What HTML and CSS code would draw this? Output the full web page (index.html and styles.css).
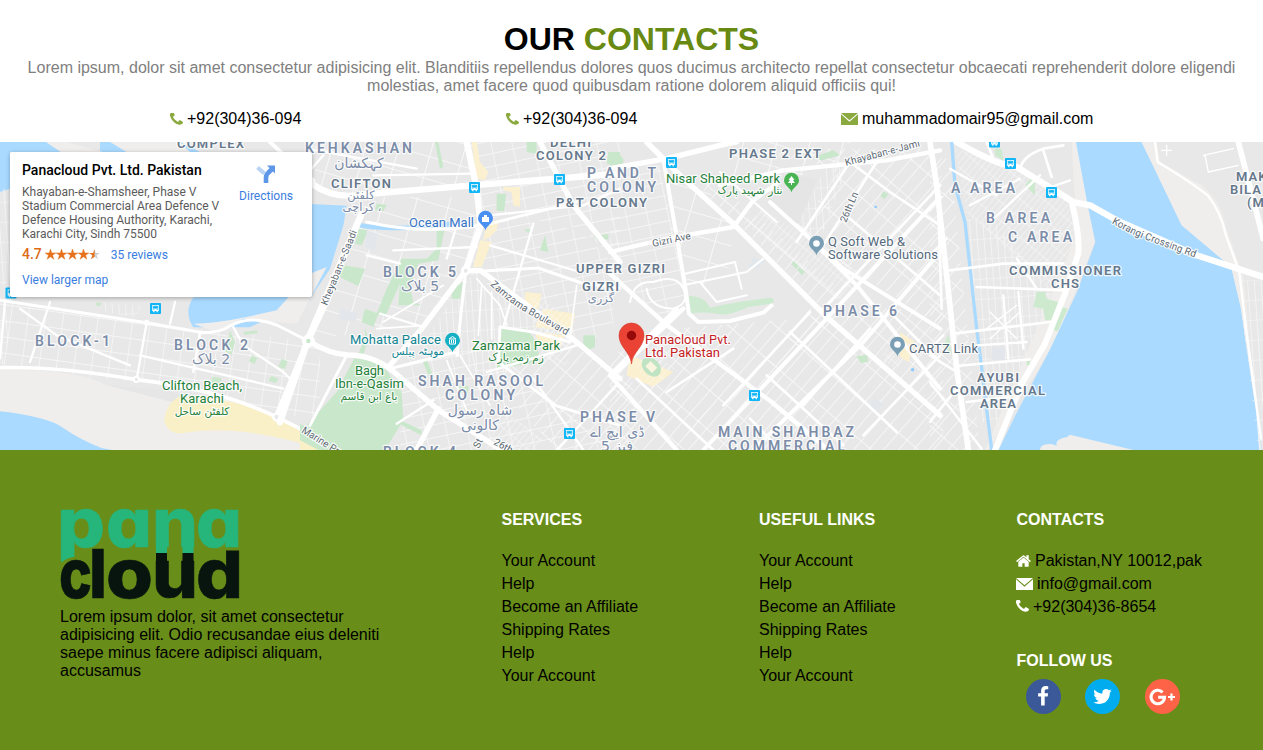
FILE: index.html
```html
<!DOCTYPE html>
<html lang="en">
<head>
<meta charset="utf-8">
<title>Our Contacts</title>
<link rel="stylesheet" href="styles.css">
</head>
<body>
<svg class="defs" width="0" height="0">
  <symbol id="phone" viewBox="192 256 1408 1408"><path d="M1600 1240q0 27-10 70.500t-21 68.500q-21 50-122 106-94 51-186 51-27 0-53-3.500t-57-12.500-47-14.500-55.500-20.500-49.500-18q-98-35-175-83-127-79-264-216t-216-264q-48-77-83-175-3-9-18-49.500t-20.500-55.500-14.500-47-12.500-57-3.500-53q0-92 51-186 56-101 106-122 25-11 68.500-21t70.500-10q14 0 21 3 18 6 53 76 11 19 30 54t35 63.500 31 53.500q3 4 17.500 25t21.500 35.500 7 28.500q0 20-28.500 50t-62 55-62 53-28.500 46q0 9 5 22.500t8.500 20.500 14 24 11.500 19q76 137 174 235t235 174q2 1 19 11.500t24 14 20.500 8.500 22.500 5q18 0 46-28.500t53-62 55-62 50-28.500q14 0 28.500 7t35.500 21.500 25 17.500q25 15 53.500 31t63.500 35 54 30q70 35 76 53 3 7 3 21z"/></symbol>
  <symbol id="mail" viewBox="0 0 17 12"><path d="M0 0h17L8.500 7.300z"/><path d="M0 1.300L8.500 8.700 17 1.300V12H0z"/></symbol>
  <symbol id="home" viewBox="64 256 1664 1280"><path d="M1472 992v480q0 26-19 45t-45 19h-384v-384h-256v384h-384q-26 0-45-19t-19-45v-480q0-1 .5-3t.5-3l575-474 575 474q1 2 1 6zm223-69l-62 74q-8 9-21 11h-3q-13 0-21-7l-692-577-692 577q-12 8-24 7-13-2-21-11l-62-74q-8-10-7-23.500t11-21.500l719-599q32-26 76-26t76 26l244 204v-195q0-14 9-23t23-9h192q14 0 23 9t9 23v408l219 182q10 8 11 21.500t-7 23.500z"/></symbol>
</svg>

<section class="contact">
  <h1>OUR <span>CONTACTS</span></h1>
  <p>Lorem ipsum, dolor sit amet consectetur adipisicing elit. Blanditiis repellendus dolores quos ducimus architecto repellat consectetur obcaecati reprehenderit dolore eligendi molestias, amet facere quod quibusdam ratione dolorem aliquid officiis qui!</p>
  <div class="contact-row">
    <div class="item"><svg class="i-phone"><use href="#phone"/></svg>+92(304)36-094</div>
    <div class="item"><svg class="i-phone"><use href="#phone"/></svg>+92(304)36-094</div>
    <div class="item"><svg class="i-mail"><use href="#mail"/></svg>muhammadomair95@gmail.com</div>
  </div>
</section>

<section class="map">
<svg class="canvas" viewBox="0 0 1263 308" width="1263" height="308">
  <defs>
    <pattern id="gridDefence" width="92" height="34" patternUnits="userSpaceOnUse" patternTransform="rotate(-49)"><path d="M0 0H92M0 0V34" stroke="#fbfbfb" stroke-width="4.500" fill="none"/></pattern>
    <pattern id="gridSoft" width="62" height="38" patternUnits="userSpaceOnUse" patternTransform="rotate(-12)"><path d="M0 0H62M0 0V38" stroke="#fafafa" stroke-width="4" fill="none"/></pattern>
    <pattern id="gridClifton" width="96" height="66" patternUnits="userSpaceOnUse" patternTransform="rotate(16)"><path d="M0 0H96M0 0V66" stroke="#fcfcfc" stroke-width="5" fill="none"/></pattern>
    <pattern id="gridWest" width="52" height="48" patternUnits="userSpaceOnUse" patternTransform="rotate(8)"><path d="M0 0H52M0 0V48" stroke="#fafafa" stroke-width="4" fill="none"/></pattern>
    <pattern id="gridFine" width="15" height="44" patternUnits="userSpaceOnUse" patternTransform="rotate(40)"><path d="M0 0H15M0 0V44" stroke="#fafafa" stroke-width="3" fill="none"/></pattern>
    <pattern id="gridUpright" width="20" height="60" patternUnits="userSpaceOnUse" patternTransform="rotate(-4)"><path d="M0 0H20M0 0V60" stroke="#fafafa" stroke-width="3.500" fill="none"/></pattern>
    <g id="bus"><rect x="-5.500" y="-5.500" width="11" height="11" rx="1" fill="#12b5f5"/><path d="M-3.300-3.500h6.600v6h-1v1.300h-1.300V2.500h-2v1.300h-1.300V2.500h-1z" fill="#fff"/><path d="M-2.200-2.300h4.400v2h-4.400zM-2.200 1h1M1.200 1h1" stroke="#12b5f5" stroke-width=".8" fill="#12b5f5"/></g>
    <path id="pin" d="M0 12C-.8 7-7.500 5.500-7.500-.2a7.500 7.500 0 0 1 15 0C7.500 5.500.8 7 0 12z"/>
    <path id="boulevard" d="M490 143Q511 163 534 175L585 204"/>
    <path id="korangi" d="M1111.500 81Q1128 91 1147 98L1215 123"/>
  </defs>
  <rect width="1263" height="308" fill="#e8e8e8"/>

  <!-- West shore -->
  <g transform="scale(.33333)">
    <path d="M0 0h960v924H0z" fill="#e8e8e8"/>
    <path d="M0 0h140L200 40 300 60V0h240l60 30H30v110L0 150z" fill="#aadaff"/>
    <path d="M138 0h60l130 35H190zM330 0h210l30 30H380z" fill="#f0eeec"/>
    <path d="M935 186l105 5-10 60-40 130-75 110-75 20-90 45H580q-30-45 0-90l350-10z" fill="#aadaff"/>
    <path d="M580 545q60 0 160-20l90-20 100-110 50-20-90 170-160-15-80 40z" fill="#f0eeec"/>
    <path d="M0 475L440 545 960 600v220L830 825 500 730 0 680z" fill="url(#gridWest)"/>
    <path d="M0 140h30v270L0 440z" fill="url(#gridUpright)"/>
    <path d="M0 500h35l-20 165H0z" fill="url(#gridUpright)"/>
    <path d="M310 480l110 12-5 35-110-20z" fill="url(#gridUpright)"/>
    <path d="M0 684q220-5 320 45l180 45 300 70 160 80H0z" fill="#f0eeec"/>
    <path d="M320 729l180 15 310 80 150 100-430-140z" fill="#e6e6e6"/>
    <path d="M0 808q140 15 190 50t115 60l30 6H0z" fill="#aadaff"/>
    <path d="M535 765q-40 25-42 75 15 40 60 33 160-30 420 51h90l-120-50-180-80-150-30z" fill="#f9f0c8"/>
    <path d="M690 565l15 35-10 38-20-10zM730 570l40-5 3 8-40 6zM756 640l16 8-8 18-18-8zM845 650l18 8-8 24-20-8zM815 702l20 8-8 14-22-8zM637 704l28 4-6 20-26-6zM290 480l14 3-4 10-12-3zM900 870l15-12 130 66h-60z" fill="#cbe8cd"/>
    <g fill="none" stroke="#fff" stroke-linecap="round" stroke-linejoin="round">
      <path d="M0 677q170-5 410 36 250 30 420 112l130 65" stroke-width="11"/>
      <path d="M0 475l440 67 170 30q50 0 80-20 60-35 140-3l95 48" stroke-width="9"/>
      <path d="M440 542l-30 170M15 478L0 650M525 480l-15 65M700 555l30 55 120 80 30 30M600 570l-20 120M420 640l430 100" stroke-width="7"/>
      <path d="M60 500l110 80 220 90M150 480l-60 180" stroke-width="7"/>
      <path d="M830 825l95-230 70-150" stroke-width="18"/>
      <path d="M810 0l70 65 60 50" stroke-width="12"/>
      <circle cx="440" cy="542" r="6" stroke-width="5"/><circle cx="409" cy="712" r="8" fill="#e8e8e8" stroke-width="6"/><circle cx="830" cy="825" r="10" fill="#e8e8e8" stroke-width="7"/>
    </g>
  </g>

  <!-- Clifton and Zamzama -->
  <g transform="translate(300) scale(.33333)">
    <path d="M20 0h500v140L170 165 60 130z" fill="url(#gridClifton)"/>
    <path d="M200 165h330v230L370 550 40 590 150 270z" fill="url(#gridClifton)"/>
    <path d="M510 0h450v360L840 260 540 200z" fill="url(#gridSoft)"/>
    <path d="M510 395l70-170 260 40 100 100v210L820 600z" fill="url(#gridSoft)"/>
    <path d="M500 400l320 205-200-50-5 190-240-150z" fill="url(#gridUpright)"/>
    <path d="M300 660l250-40 400 304H300z" fill="url(#gridSoft)"/>
    <path d="M560 690l260-90 180 120v204H770z" fill="url(#gridDefence)"/>
    <path d="M690 560l130 0-20 110-100-30zM600 800l130 90-30 34H560z" fill="url(#gridFine)"/>
    <path d="M180 250q100 20 320-10" fill="none" stroke="#aadaff" stroke-width="14"/>
    <path d="M130 370l65 10-20 52-58-28zM175 260l30 5-20 45-20-5zM305 350l75 0 30-30 0-65 25 0-20 100-60 10-25 70 10 45 25 10-70 0 5-65-45 100-25-10 30-75zM195 500l40 15-15 40-35-15zM195 555l0 35-20 45 15 0 15-40zM600 560l80 0 30 40 10 60-130 20zM455 440l35-20-10 50-25 0zM720 325l15-45 10 50zM590 155h28l-5 52h-23zM405 0l15 80 10-5-15-75zM850 580h35v35l-35 15zM670 262h22l-5 10zM880 280l45-3v15l-30 3zM365 650h15l20 55-15-5zM470 732h35v20h-25zM300 835l65 30 0 15-60-30zM230 185l30 3-10 20-25-3zM925 30h35v45l-40-10zM680 0h30v35l-30-5z" fill="#c9e7ca"/>
    <path d="M165 645q50-10 95 40l45 65 5 85-55 89H110L20 850l90-100z" fill="#c9e7ca"/>
    <path d="M0 845l150 79H0z" fill="#c9e7ca"/><path d="M0 895l55 29H0z" fill="#f9f0c8"/>
    <path d="M515 0h15l10 60 25 30-10 25-25-5zM610 135h50l0 60-20-5-5-40-25-5zM560 240l35-5-5 30-20 20-20 10zM540 295l35 5-30 75h-25zM675 450l50 5-10 45-40-5zM730 500l95 15-10 55-110-15zM705 570l90 10-20 50-60-20z" fill="#fbf0cf"/>
    <path d="M200 265l35 10-15 55-25-15zM120 500l55 15-10 25-50-10z" fill="#e3e7ec"/>
    <path d="M690 450l135 80-20 110-100-70z" fill="url(#gridFine)"/>
    <g fill="none" stroke="#fff" stroke-linecap="round" stroke-linejoin="round">
      <path d="M35 125q70 50 155 32L580 125 960 95M500 0l30 140 12 110-45 136" stroke-width="19"/>
      <path d="M185 215L25 590-60 840" stroke-width="20"/>
      <path d="M497 386L365 560 270 670M25 597q65 40 120 42 70 0 130 45l140 120 190 120M497 386h45L830 600l130 110" stroke-width="16"/>
      <path d="M415 800l-65 124M720 0l100 190 140 170" stroke-width="16"/>
      <path d="M535 388l180-10 130 45 115 15M497 386l-20 185-5 70M270 680l200-50M140 640L30 850M600 555l100 15 110 30M600 555l-5 105 170 130 195 60M200 240q220 50 430-10l200-50" stroke-width="9"/>
      <path d="M700 245l-90 310M540 250l-70 0-30 100M280 325l250-10M200 340l100 25M240 515l130 40M830 610L560 690M700 710L850 924M950 730L770 924M350 80L20 20M70 40L0 120M570 310l270 80M570 220l280-30 110-50M520 95l-300 5M290 845l110-70" stroke-width="7"/>
      <path d="M530 410l70 80 20 60M545 430l-10 150M575 450v140M250 540l180-110M230 560l150-10M440 655l60 150M480 640l90 150M830 430l-20 160" stroke-width="5"/>
      <circle cx="25" cy="597" r="13" fill="#c9e7ca" stroke-width="13"/><circle cx="497" cy="386" r="10" fill="#e8e8e8" stroke-width="8"/>
    </g>
  </g>

  <!-- Defence phases -->
  <g transform="translate(610) scale(.33333)">
    <path d="M0 70l150 0 80 420-60 50L0 410z" fill="url(#gridSoft)"/>
    <path d="M180 90l130 70 60 100-20 160-130 10-50-210z" fill="url(#gridClifton)"/>
    <path d="M280 150l90 80 280 280 50-60-400-350zM600 500l400 0v424H170L460 640z" fill="url(#gridDefence)"/>
    <path d="M400 20h595v530L590 300l-30-30 130-190z" fill="url(#gridDefence)"/>
    <path d="M0 640l190-80 500-40-520 404H0z" fill="url(#gridDefence)"/>
    <path d="M400 240l60-40 320 210-90 60z" fill="url(#gridFine)"/>
    <path d="M460 160l100-60 60 10-60 150z" fill="#e5e5e5"/>
    <path d="M560 250l90-180 60 10-80 220z" fill="url(#gridUpright)"/>
    <path d="M380 0h340l-30 90-370 30z" fill="url(#gridClifton)"/>
    <path d="M236 462q30 0 50 15l15 20q40-10 90-18l90-12q20 5 5 18l-70 10q-55 25-85 22-45-10-95-2z" fill="#cdead0"/>
    <path d="M0 30q25 0 40 20v25H0zM610 45l60-20 20 15-55 15zM550 357l16 14-8 10-14-14zM568 375l16 14-8 10-14-14zM820 148l15 8-12 16-12-10zM738 642l35-3 0 20-20 4z" fill="#c9e7ca"/>
    <path d="M60 640L190 690 130 735 50 700z" fill="#fbf0cf"/><path d="M65 660l70-20 60 40-65 60z" fill="url(#gridFine)"/><ellipse cx="124" cy="675" rx="33" ry="24" transform="rotate(45 124 675)" fill="#bfe3c3"/><rect x="110" y="664" width="28" height="22" transform="rotate(45 124 675)" fill="#faf5de"/>
    <path d="M870 570l45 30-20 60-25-15z" fill="#fbf0cf"/><path d="M830 620l50 35-20 25-50-30z" fill="url(#gridFine)"/>
    <path d="M430 345l35 15-20 20-30-5zM790 770l30 15-20 25-25-15z" fill="#e2e7ec"/>
    <g fill="none" stroke="#fff" stroke-linecap="round" stroke-linejoin="round">
      <path d="M110 0L215 105 375 250 650 525 990 820M0 80L170 50 330 10 380 0" stroke-width="16"/>
      <path d="M160 50L225 430 237 515 265 540 360 537 460 512 485 490" stroke-width="12"/>
      <path d="M0 330l170-40 200-35 60-80 70-50M330 130L520 85 830 55 990 25" stroke-width="13"/>
      <path d="M0 395l165 150 320 235 170 144M200 500L0 700M0 700l200 224M220 500l-200 190" stroke-width="13"/>
      <path d="M990 165L650 530 280 924M990 330L760 600 430 924M990 560L700 380 480 180M990 740L740 430 560 250" stroke-width="12"/>
      <path d="M990 250L840 150 720 60 560 300M990 460L850 340 720 230M990 130L640 500M800 60L640 310" stroke-width="8"/>
      <path d="M370 620L170 750M600 510L340 790M540 570l320 300M780 560L580 790M850 520l140 140M990 640L760 880M960 0l25 200 10 300" stroke-width="8"/>
      <path d="M60 480q10-65 70-60 70-25 90 20t-30 60q-70 0-80-60M220 430l190-40 50-40M270 420l50 60 90-20M330 90l170 150M225 395l150-35 20 80" stroke-width="6"/>
      <path d="M420 830l90 94M80 710l230 214M470 700l230 210" stroke-width="8"/>
    </g>
    <g fill="#8ccaff"><circle cx="797" cy="195" r="4"/><circle cx="908" cy="683" r="5"/></g>
  </g>

  <!-- Creek and eastern areas -->
  <g transform="translate(930) scale(.33333)">
    <path d="M0 50h60l90 874H0z" fill="url(#gridDefence)"/>
    <path d="M75 20l130 40 200 100 40 120-90 160L110 210z" fill="url(#gridFine)"/>
    <path d="M100 230l90 10 170 200 40 20-90 190-110 270-50-100z" fill="url(#gridUpright)"/>
    <path d="M425 0h20l50 300-120 300-200 324h-10L440 280z" fill="#f0eeec"/>
    <path d="M438 0l35 190 23 110-55 150-80 170-110 210-45 94h790L932 495 905 380 880 355 755 250 635 0z" fill="#aadaff"/>
    <path d="M635 0h45l10 60 125 70q60 50 70 120l55 150 49 524h6L932 495 905 380 880 355 755 250z" fill="#f0eeec"/>
    <path d="M935 415h64v509h-15l-40-350z" fill="url(#gridUpright)"/>
    <path d="M330 924q0-20 35-18l15 5q-5-20 30-25l10-8 190 46z" fill="#f0eeec"/>
    <path d="M65 0l10 130 30 110 35 320 25 200 20 164" fill="none" stroke="#aadaff" stroke-width="10"/>
    <path d="M300 110l15 0v50l-30-30zM195 20h20l5 35-25-15zM320 450l25 0 5 20 35 10-20 55-20 0-5-35-30-5zM395 495l18 5-30 68-15-5zM55 575l10 60-25-20zM290 650h10v20h-10z" fill="#cdeacf"/>
    <path d="M185 615h40v40h-40z" fill="#e3e7ec"/>
    <g fill="none" stroke="#fff" stroke-linecap="round" stroke-linejoin="round">
      <path d="M80 0Q200 70 260 75L430 180l50 10 80 45 240 105 200 65" stroke-width="19"/>
      <path d="M425 180q25 100 20 155l-40 120-60 150-70 120-80 199" stroke-width="18"/>
      <path d="M0 0l20 130 30 270 30 280 35 244M925 0l75 290" stroke-width="17"/>
      <path d="M675 0l8 60q100 60 150 100 40 50 55 120l40 110 20 170 45 330" stroke-width="7"/>
      <path d="M60 385l160-20 180 0M140 435l270 10M70 575l290-35M80 672l220-20M110 780l130-15M170 0l20 50M270 80q10-40 70-60l60-10M340 25l25 80" stroke-width="8"/>
      <path d="M0 720l155 200M80 740L0 840M40 580L0 620M60 80l140 80M120 190l150-80M180 240L330 100M350 140l70-25M260 350l60 90M220 460l15 190M265 450l15 170M140 610l150-10M0 640l80 50M0 340l50-50" stroke-width="7"/>
      <path d="M170 560l90-70M180 590l90-80M180 510l80 80M820 40l90-20M825 40l10 50 90-20M695 25h30M710 10v30" stroke-width="4"/>
    </g>
  </g>

  <g class="areas">
    <text x="35" y="204" textLength="75">BLOCK-1</text><text x="174" y="208" textLength="74">BLOCK 2</text>
    <text x="305" y="11" textLength="107">KEHKASHAN</text><text x="383" y="135" textLength="73">BLOCK 5</text>
    <text x="418" y="244" textLength="125">SHAH RASOOL</text><text x="445" y="258" textLength="70">COLONY</text>
    <text x="383" y="315" textLength="73">BLOCK 4</text><text x="580" y="280" textLength="75">PHASE V</text>
    <text x="587" y="36" textLength="69">P AND T</text><text x="587" y="50" textLength="69">COLONY</text>
    <text x="823" y="174" textLength="74">PHASE 6</text><text x="718" y="295" textLength="136">MAIN SHAHBAZ</text><text x="728" y="309" textLength="117">COMMERCIAL</text>
    <text x="951" y="51" textLength="64">A AREA</text><text x="986" y="81" textLength="64">B AREA</text><text x="1008" y="100" textLength="64">C AREA</text>
  </g>
  <g class="towns">
    <text x="177" y="6" textLength="68">COMPLEX</text><text x="331" y="46" textLength="61">CLIFTON</text>
    <text x="550" y="5" textLength="42">DELHI</text><text x="536" y="18" textLength="71">COLONY 2</text>
    <text x="556" y="65" textLength="92">P&amp;T COLONY</text><text x="576" y="131" textLength="90">UPPER GIZRI</text><text x="582" y="149" textLength="38">GIZRI</text>
    <text x="729" y="16" textLength="93">PHASE 2 EXT</text><text x="1009" y="133" textLength="113">COMMISSIONER</text><text x="1051" y="146" textLength="29">CHS</text>
    <text x="977" y="240" textLength="43">AYUBI</text><text x="950" y="253" textLength="96">COMMERCIAL</text><text x="980" y="266" textLength="37">AREA</text>
    <text x="1236" y="39">MAK</text><text x="1230" y="52">BILA</text><text x="1247" y="65">(M</text>
  </g>
  <g class="urdu">
    <text x="211" y="222">2 بلاک</text><text x="359" y="26">کہکشان</text><text x="361" y="57" class="small">کلفٹن</text><text x="362" y="69" class="small">، کراچی</text>
    <text x="420" y="149">5 بلاک</text><text x="480" y="273">شاہ رسول</text><text x="480" y="288">کالونی</text><text x="601" y="160" class="small">گزری</text>
    <text x="617" y="295">ڈی ایچ اے</text><text x="617" y="309">فیز 5</text>
  </g>
  <g class="urdu small green"><text x="202" y="273">کلفٹن ساحل</text><text x="369" y="258">باغ ابن قاسم</text><text x="516" y="219">زم زمہ پارک</text><text x="750" y="52">نثار شہید پارک</text><text x="418" y="213" class="teal">موہٹہ پیلس</text></g>
  <g class="places">
    <g class="green"><text x="162" y="248" textLength="80">Clifton Beach,</text><text x="180" y="261" textLength="44">Karachi</text><text x="355" y="233" textLength="29">Bagh</text><text x="335" y="246" textLength="69">Ibn-e-Qasim</text><text x="472" y="208" textLength="88">Zamzama Park</text><text x="666" y="41" textLength="114">Nisar Shaheed Park</text></g>
    <text x="409" y="85" textLength="65" class="blue">Ocean Mall</text><text x="350" y="202" textLength="91" class="teal">Mohatta Palace</text>
    <text x="828" y="104" textLength="77">Q Soft Web &amp;</text><text x="828" y="117" textLength="110">Software Solutions</text><text x="909" y="211" textLength="69">CARTZ Link</text>
    <g class="red"><text x="645" y="202" textLength="86">Panacloud Pvt.</text><text x="645" y="215" textLength="75">Ltd. Pakistan</text></g>
  </g>
  <g class="roads">
    <text transform="translate(327 164) rotate(-68)" textLength="80">Kheyaban-e-Saadi</text>
    <text><textPath href="#boulevard">Zamzama Boulevard</textPath></text>
    <text><textPath href="#korangi">Korangi Crossing Rd</textPath></text>
    <text transform="translate(653 105) rotate(-12)" textLength="39">Gizri Ave</text><text transform="translate(846 24) rotate(-15)" textLength="77">Khayaban-e-Jami</text>
    <text transform="translate(846 81) rotate(-67)" textLength="32">26th Ln</text>
    <text transform="translate(301 290) rotate(32)" textLength="56">Marine Prom</text><text transform="translate(493 302) rotate(29)">26th St</text><text transform="translate(479 307) rotate(-65)">St</text>
  </g>

  <use href="#bus" x="11" y="151"/><use href="#bus" x="155.500" y="166.500"/><use href="#bus" x="474.500" y="45.500"/><use href="#bus" x="559.500" y="37.500"/><use href="#bus" x="671.500" y="20.500"/><use href="#bus" x="754.500" y="253.500"/><use href="#bus" x="569.500" y="291.500"/><use href="#bus" x="994.500" y="0"/><use href="#bus" x="1010.500" y="21.500"/><use href="#bus" x="1051.500" y="50.500"/>
  <g class="pins">
    <use href="#pin" x="485.500" y="76.500" fill="#4a90f2"/><path d="M482 75h7v5h-7zM484 75v-2h3v2" fill="#fff"/>
    <use href="#pin" x="452.500" y="198.500" fill="#16b0c5"/><path d="M449 197l3.500-2.500 3.500 2.500zM449.500 198v4h6v-4M451.500 198v3M453.500 198v3" fill="none" stroke="#fff"/>
    <use href="#pin" x="791.500" y="38.500" fill="#49b552"/><path d="M791.500 34l3 4h-1.500l2 3h-3v2h-1v-2h-3l2-3h-1.500z" fill="#fff"/>
    <use href="#pin" x="816.500" y="101.500" fill="#7a9fb5"/><circle cx="816.500" cy="101.500" r="3.300" fill="#fff"/>
    <use href="#pin" x="897.500" y="202.500" fill="#7a9fb5"/><circle cx="897.500" cy="202.500" r="3.300" fill="#fff"/>
    <path d="M631.500 222c-1-12-12.500-17-12.500-28.500a12.500 12.500 0 0 1 25 0c0 11.500-11.500 16.500-12.500 28.500z" fill="#ea4335" stroke="#d13b2e" stroke-width=".6"/><circle cx="631.500" cy="193.500" r="4.700" fill="#960a0a"/>
  </g>
</svg>

<div class="place-card">
  <div class="place-info">
    <h2>Panacloud Pvt. Ltd. Pakistan</h2>
    <address>Khayaban-e-Shamsheer, Phase V Stadium Commercial Area Defence V Defence Housing Authority, Karachi, Karachi City, Sindh 75500</address>
    <div class="rating"><b>4.7</b>
      <svg width="55" height="11" viewBox="0 0 55 11"><defs><path id="star" d="M5.500 0l1.300 3.900h4.100L7.600 6.300 8.900 10.300 5.500 7.800 2.100 10.300 3.400 6.300.1 3.900h4.100z"/></defs><g fill="#e7711b" stroke="#e7711b" stroke-width=".4"><use href="#star"/><use href="#star" x="11"/><use href="#star" x="22"/><use href="#star" x="33"/></g><use href="#star" x="44" fill="#cfcfcf"/><path d="M49.500 0v7.800l-3.400 2.500 1.300-4L44.100 3.900h4.100z" fill="#e7711b"/></svg>
      <a>35 reviews</a></div>
    <a>View larger map</a>
  </div>
  <div class="directions"><svg width="22" height="22" viewBox="0 0 22 22"><path d="M2.500 5.500l7 6" stroke="#b9d3f5" stroke-width="4"/><path d="M11 21v-5q0-3.500 2.500-5.500l4-4" fill="none" stroke="#5e97e8" stroke-width="4.600"/><path d="M12 3.500h8v8z" fill="#5e97e8"/></svg><a>Directions</a></div>
</div>
</section>

<footer>
  <div class="about">
    <svg class="logo" width="180" height="90" viewBox="0 0 180 90" role="img" aria-label="pana cloud">
      <defs>
        <clipPath id="pCut"><path d="M-1-2H46V47H13Q5 48-1 55z"/></clipPath>
        <clipPath id="lCut"><path d="M30 40L46 28V92H30z"/></clipPath>
        <clipPath id="dCut"><path d="M134 40.500H182V92H134z"/></clipPath>
      </defs>
      <g class="pana"><g clip-path="url(#pCut)"><text x="-3" y="37" textLength="48" lengthAdjust="spacingAndGlyphs">p</text></g><text x="46" y="37" textLength="46" lengthAdjust="spacingAndGlyphs">a</text><text x="92" y="37" textLength="46" lengthAdjust="spacingAndGlyphs">n</text><text x="136" y="37" textLength="46" lengthAdjust="spacingAndGlyphs">a</text>
        <path d="M96 35h11v8H96zM122.500 35h11v8h-11z" stroke="none"/></g>
      <g class="cloud"><text x="-1" y="88" textLength="33" lengthAdjust="spacingAndGlyphs">c</text><g clip-path="url(#lCut)"><text x="29" y="88" textLength="18" lengthAdjust="spacingAndGlyphs">l</text></g><text x="46" y="88" textLength="47" lengthAdjust="spacingAndGlyphs">o</text><text x="92" y="88" textLength="46" lengthAdjust="spacingAndGlyphs">u</text><g clip-path="url(#dCut)"><text x="136" y="88" textLength="47" lengthAdjust="spacingAndGlyphs">d</text></g>
        <path d="M96 43h11v12H96zM122.500 43h11v12h-11z" stroke="none"/></g>
    </svg>
    <p>Lorem ipsum dolor, sit amet consectetur adipisicing elit. Odio recusandae eius deleniti saepe minus facere adipisci aliquam, accusamus</p>
  </div>
  <div><h3>SERVICES</h3><ul><li>Your Account</li><li>Help</li><li>Become an Affiliate</li><li>Shipping Rates</li><li>Help</li><li>Your Account</li></ul></div>
  <div><h3>USEFUL LINKS</h3><ul><li>Your Account</li><li>Help</li><li>Become an Affiliate</li><li>Shipping Rates</li><li>Help</li><li>Your Account</li></ul></div>
  <div class="reach"><h3>CONTACTS</h3>
    <ul><li><svg class="i-home"><use href="#home"/></svg>Pakistan,NY 10012,pak</li><li><svg class="i-mail"><use href="#mail"/></svg>info@gmail.com</li><li><svg class="i-phone"><use href="#phone"/></svg>+92(304)36-8654</li></ul>
    <h3 class="follow">FOLLOW US</h3>
    <div class="social">
      <span class="fb"><svg width="22" height="21" viewBox="0 0 1792 1792"><path d="M1343 12v264h-157q-86 0-116 36t-30 108v189h293l-39 296h-254v759h-306v-759h-255v-296h255v-218q0-186 104-288.500t277-102.500q147 0 228 12z"/></svg></span>
      <span class="tw"><svg width="21" height="21" viewBox="0 0 1792 1792"><path d="M1684 408q-67 98-162 167 1 14 1 42 0 130-38 259.500t-115.500 248.500-184.500 210.500-258 146-323 54.500q-271 0-496-145 35 4 78 4 225 0 401-138-105-2-188-64.500t-114-159.500q33 5 61 5 43 0 85-11-112-23-185.500-111.500t-73.500-205.500v-4q68 38 146 41-66-44-105-115t-39-154q0-88 44-163 121 149 294.500 238.500t371.500 99.500q-8-38-8-74 0-134 94.500-228.500t228.500-94.500q140 0 236 102 109-21 205-78-37 115-142 178 93-10 186-50z"/></svg></span>
      <span class="gp"><svg width="27" height="18" viewBox="0 0 27 18"><path d="M13.600 4.300A6.700 6.700 0 1 0 15.500 9.200H9.200" fill="none" stroke="#fff" stroke-width="3.100"/><path d="M22.500 5.500v7M19 9h7" stroke="#fff" stroke-width="2.200"/></svg></span>
    </div>
  </div>
</footer>
</body>
</html>
```

FILE: styles.css
```css
* { box-sizing: border-box; margin: 0; padding: 0; }
body { font: 16px/18px "Liberation Sans", Arial, sans-serif; color: #000; background: #fff; overflow: hidden; }
.defs { position: absolute; }
ul { list-style: none; }
svg { flex: none; }

.contact { height: 142px; padding: 20px 20px 0; text-align: center; }
.contact h1 { font-size: 32px; line-height: 38px; margin-bottom: 1px; }
.contact h1 span { color: #688a13; }
.contact p { color: #808080; }
.contact-row { display: grid; grid-template-columns: repeat(3, 336px); padding: 15px 0 0 149px; }
.item { display: flex; align-items: center; text-align: left; }
.item svg { fill: #8aa93f; }
.i-phone { width: 13px; height: 13px; margin: 0 4px 0 1px; }
.i-mail { width: 17px; height: 12px; margin-right: 4px; }
.i-home { width: 15px; height: 12px; margin-right: 4px; }

.map { height: 308px; position: relative; overflow: hidden; font-family: Roboto, sans-serif; }
.canvas { display: block; }
.canvas text { paint-order: stroke; stroke: #fff; stroke-width: 2.5px; stroke-opacity: .8; stroke-linejoin: round; }
.areas { font-size: 14px; font-weight: 600; fill: #7b8ca8; }
.towns { font-size: 13px; font-weight: 600; fill: #65788c; letter-spacing: 1px; }
.places { font-size: 13px; fill: #54697c; }
.roads { font-size: 10px; fill: #5c6873; }
.urdu { font: 14px "DejaVu Sans", sans-serif; fill: #7b8ca8; text-anchor: middle; }
.urdu text { direction: rtl; }
.urdu.small, .urdu .small { font-size: 11.5px; }
.urdu.small text { font-size: 10.5px; }
.green { fill: #24803a; }
.blue { fill: #3874c4; }
.teal { fill: #128594; }
.red { fill: #c5221f; }

.place-card { position: absolute; left: 10px; top: 10px; width: 302px; height: 145px; padding: 10px 19px 0 12px; display: flex; justify-content: space-between; background: #fff; border-radius: 2px; box-shadow: 0 1px 4px rgba(0, 0, 0, .3); font-size: 12px; line-height: 14px; }
.place-info { width: 202px; }
.place-card h2 { font-size: 14px; line-height: 17px; font-weight: 500; margin-bottom: 6px; white-space: nowrap; }
.place-card address { font-style: normal; color: #5b5b5b; }
.place-card a { color: #3a7de0; }
.rating { display: flex; align-items: center; height: 16px; margin: 5px 0 11px; }
.rating b { color: #dd6b14; font-size: 14px; font-weight: 500; margin-right: 3px; }
.rating a { margin-left: 11px; padding-top: 1px; }
.directions { display: flex; flex-direction: column; align-items: center; gap: 5px; }

footer { height: 300px; padding: 60px 59px 0 60px; background: #688e19; display: grid; grid-template-columns: 368px 184px 184px 187px; column-gap: 73.5px; }
.about p { width: 330px; margin-top: 8px; }
.logo { display: block; overflow: visible; }
.logo text { font: 800 68px Inter, sans-serif; font-feature-settings: "cv11" 1; stroke-width: .6px; }
.pana { fill: #26b57b; stroke: #26b57b; }
.cloud { fill: #08150f; stroke: #08150f; }
footer h3 { color: #fff; font-size: 16px; line-height: 18px; padding-top: 1px; margin-bottom: 20px; }
footer li { height: 23px; line-height: 23px; display: flex; align-items: center; white-space: nowrap; }
footer li svg { fill: #fff; }
.reach li svg { margin-left: -.5px; }
footer h3.follow { margin: 33px 0 9px; }
.social { display: flex; gap: 24.5px; padding-left: 9px; }
.social span { width: 35px; height: 35px; border-radius: 50%; display: grid; place-items: center; fill: #fff; }
.fb { background: #3b5998; }
.tw { background: #00acee; }
.gp { background: #ff6347; }
```
